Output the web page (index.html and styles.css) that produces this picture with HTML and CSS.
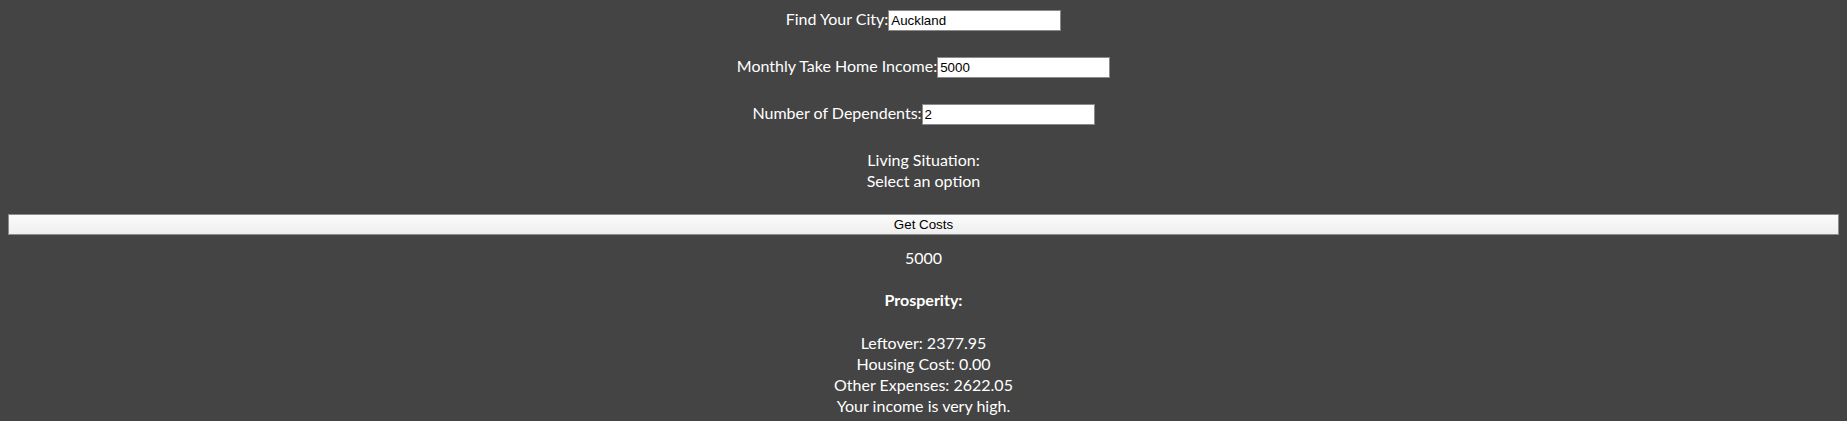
FILE: index.html
```html
<!DOCTYPE html>
<html>
<head>
<meta charset="utf-8">
<link rel="stylesheet" href="styles.css">
</head>
<body>
<div class="form">
  <div class="row"><label class="label">Find Your City:</label><input class="field" type="text" value="Auckland"></div>
  <div class="row"><label class="label">Monthly Take Home Income:</label><input class="field" type="text" value="5000"></div>
  <div class="row"><label class="label">Number of Dependents:</label><input class="field" type="text" value="2"></div>
  <div class="living">
    <div>Living Situation:</div>
    <div>Select an option</div>
  </div>
</div>
<button class="submit">Get Costs</button>
<div class="results">
  <div class="income">5000</div>
  <div class="heading">Prosperity:</div>
  <div class="details">
    <div>Leftover: 2377.95</div>
    <div>Housing Cost: 0.00</div>
    <div>Other Expenses: 2622.05</div>
    <div>Your income is very high.</div>
  </div>
</div>
</body>
</html>
```

FILE: styles.css
```css
html, body {
  background: #444444;
}
body {
  margin: 8px;
  color: #ffffff;
  font-family: "Segoe UI", Lato, "Liberation Sans", sans-serif;
  font-size: 16px;
  line-height: 21px;
  text-align: center;
}
.form {
  display: flex;
  flex-direction: column;
  align-items: center;
  gap: 26px;
  padding-top: 0;
}
.row {
  display: flex;
  align-items: baseline;
  justify-content: center;
  height: 21px;
}
.label {
  white-space: nowrap;
}
.field {
  box-sizing: border-box;
  width: 173px;
  height: 21px;
  margin: 0;
  padding: 1px 2px;
  border: 1px solid #8a8a8a;
  background: #ffffff;
  color: #000000;
  font-family: "Liberation Sans", Arial, sans-serif;
  font-size: 13.333px;
}
.living {
  line-height: 21px;
}
.submit {
  display: block;
  box-sizing: border-box;
  width: 100%;
  height: 21px;
  margin: 23px 0 0 0;
  padding: 0;
  border: 1px solid #8c8c8c;
  background: linear-gradient(#fbfbfb, #efefef);
  color: #000000;
  font-family: "Liberation Sans", Arial, sans-serif;
  font-size: 13.333px;
  line-height: 17px;
}
.results {
  padding-top: 12px;
}
.heading {
  font-weight: bold;
  margin: 21px 0 22px;
}
```
